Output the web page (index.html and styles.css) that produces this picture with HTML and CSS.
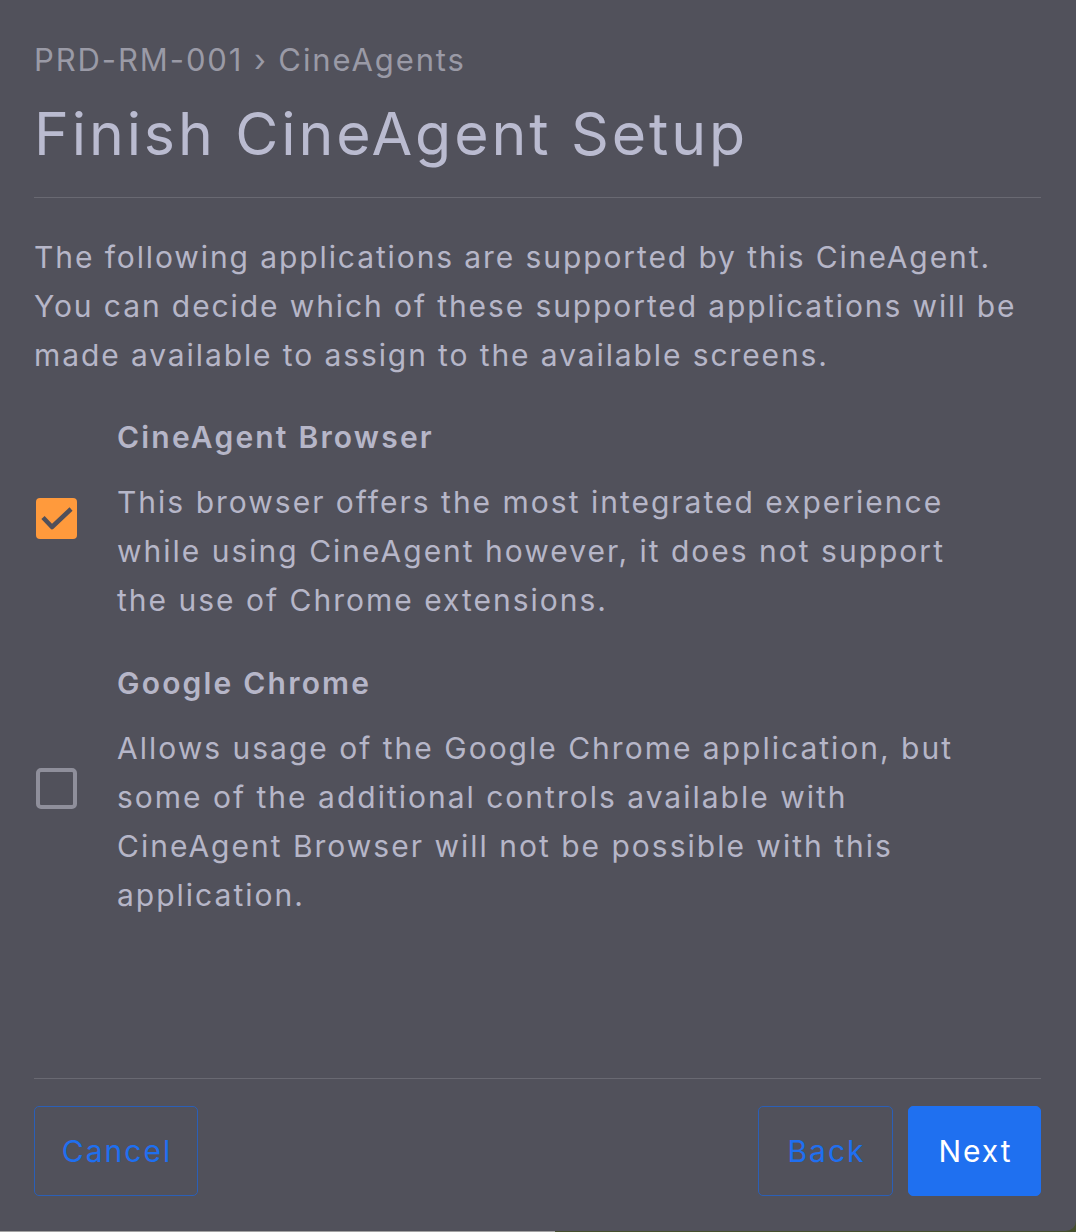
FILE: index.html
```html
<!DOCTYPE html>
<html lang="en">
<head>
<meta charset="utf-8">
<title>Finish CineAgent Setup</title>
<link rel="stylesheet" href="styles.css">
</head>
<body>
<div class="panel">
  <div class="breadcrumb">PRD-RM-001 › CineAgents</div>
  <h1 class="title">Finish CineAgent Setup</h1>
  <hr class="divider top-divider">
  <p class="intro">The following applications are supported by this CineAgent. You can decide which of these supported applications will be made available to assign to the available screens.</p>

  <div class="option">
    <span class="checkbox checked">
      <svg viewBox="0 0 41 41" width="41" height="41"><path d="M7 19.5 L16 29 L35 11" fill="none" stroke="#50505a" stroke-width="4.5" stroke-linecap="butt" stroke-linejoin="round"/></svg>
    </span>
    <div class="option-text">
      <div class="option-title">CineAgent Browser</div>
      <p class="option-desc">This browser offers the most integrated experience while using CineAgent however, it does not support the use of Chrome extensions.</p>
    </div>
  </div>

  <div class="option">
    <span class="checkbox"></span>
    <div class="option-text">
      <div class="option-title">Google Chrome</div>
      <p class="option-desc">Allows usage of the Google Chrome application, but some of the additional controls available with CineAgent Browser will not be possible with this application.</p>
    </div>
  </div>

  <div class="footer">
    <hr class="divider">
    <div class="actions">
      <button class="btn btn-outline btn-cancel">Cancel</button>
      <div class="actions-right">
        <button class="btn btn-outline btn-back">Back</button>
        <button class="btn btn-primary btn-next">Next</button>
      </div>
    </div>
  </div>
</div>
</body>
</html>
```
FILE: styles.css
```css
html, body {
  margin: 0;
  padding: 0;
}
body {
  width: 1076px;
  height: 1232px;
  background: linear-gradient(to right, #a2a2a2 0, #a2a2a2 555px, #46502e 555px, #46502e 100%);
  font-family: Inter, "Noto Sans", sans-serif;
  overflow: hidden;
}
.panel {
  box-sizing: border-box;
  height: 1231px;
  background: #51515b;
  border-bottom-right-radius: 10px;
  padding: 0 35px 35px 34px;
  display: flex;
  flex-direction: column;
}
.breadcrumb {
  margin-top: 40px;
  font-size: 31px;
  line-height: 40px;
  letter-spacing: 1.9px;
  color: #9a9aa6;
}
.title {
  margin: 18px 0 0 0;
  font-size: 59px;
  line-height: 72px;
  font-weight: 400;
  letter-spacing: 2.9px;
  color: #babbd0;
}
.divider {
  margin: 0;
  border: 0;
  height: 1px;
  background: #696972;
}
.top-divider {
  margin-top: 27px;
}
.intro {
  margin: 35px 0 0 0;
  font-size: 30px;
  line-height: 49px;
  letter-spacing: 1.9px;
  color: #b6b6c8;
}
.option {
  display: flex;
  align-items: center;
  gap: 40px;
  margin-top: 37px;
}
.option + .option {
  margin-top: 38px;
}
.checkbox {
  flex: none;
  box-sizing: border-box;
  width: 41px;
  height: 41px;
  margin: 0 0 6px 2px;
  border-radius: 5px;
  border: 4px solid #8f8f9b;
  display: flex;
}
.checkbox.checked {
  border: 0;
  border-radius: 4px;
  background: #ff9a3c;
}
.option-text {
  flex: 1;
  padding-right: 60px;
}
.option-title {
  font-size: 30px;
  line-height: 40px;
  font-weight: 600;
  letter-spacing: 2.2px;
  color: #b6b6c8;
}
.option-desc {
  margin: 21px 0 0 0;
  font-size: 30px;
  line-height: 49px;
  letter-spacing: 2px;
  color: #b6b6c8;
}
.footer {
  margin-top: auto;
}
.actions {
  margin-top: 27px;
  display: flex;
  justify-content: space-between;
}
.actions-right {
  display: flex;
  gap: 15px;
}
.btn {
  box-sizing: border-box;
  height: 90px;
  border-radius: 5px;
  font-family: inherit;
  font-size: 30px;
  letter-spacing: 2px;
  padding: 0 0 0 2px;
  cursor: pointer;
}
.btn-outline {
  background: transparent;
  border: 1px solid #2b5fb6;
  color: #1f6ff0;
}
.btn-cancel {
  width: 164px;
}
.btn-back {
  width: 135px;
}
.btn-primary {
  width: 133px;
  background: #1f70f0;
  border: 1px solid #1f70f0;
  color: #ffffff;
}
```
